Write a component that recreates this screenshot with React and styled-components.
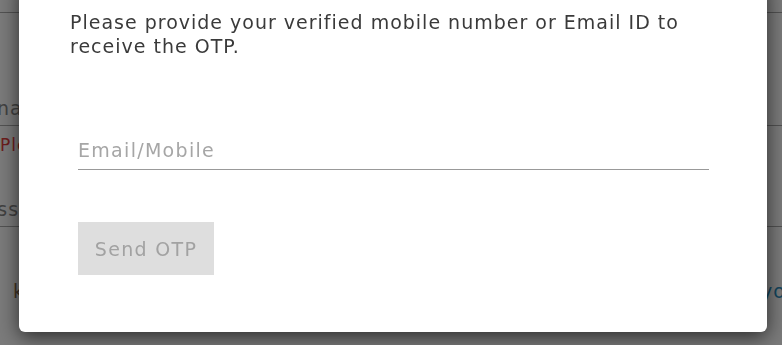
import styled, { createGlobalStyle } from "styled-components";

const GlobalStyle = createGlobalStyle`
  html, body {
    margin: 0;
    padding: 0;
    width: 782px;
    height: 345px;
    overflow: hidden;
    background: #fff;
    font-family: "DejaVu Sans", "Open Sans", sans-serif;
    letter-spacing: 1px;
  }
`;

// page behind the modal
const Page = styled.div`
  width: 782px;
  height: 345px;
  overflow: hidden;
`;

const Form = styled.form`
  margin: 12px -60px 0;
  border-top: 1px solid #aaa;
  display: flex;
  flex-direction: column;
`;

const Field = styled.div`
  height: ${(p) => p.$height}px;
  display: flex;
  align-items: flex-end;
  padding-bottom: 6px;
  border-bottom: 1px solid #aaa;
  box-sizing: border-box;
  font-size: 19px;
  color: #888;
  text-indent: ${(p) => p.$indent}px;
`;

const Error = styled.div`
  height: 60px;
  padding-top: 9px;
  box-sizing: border-box;
  font-size: 17px;
  color: #e03c3c;
  text-indent: ${(p) => p.$indent}px;
`;

const Footer = styled.div`
  display: flex;
  justify-content: space-between;
  align-items: center;
  padding: 53px 0 0 73px;
  font-size: 19px;
`;

const Remember = styled.span`
  color: #8a6a50;
`;

const Forgot = styled.a`
  color: #2a8fc0;
  margin-right: -82px;
`;

// modal
const Backdrop = styled.div`
  position: fixed;
  inset: 0;
  background: rgba(0, 0, 0, 0.52);
  display: flex;
  align-items: flex-start;
  padding-left: 19px;
`;

const Modal = styled.div`
  width: 748px;
  margin-top: -20px;
  box-sizing: border-box;
  padding: 30px 51px 57px;
  background: #fff;
  border-radius: 6px;
  box-shadow: 0 5px 20px rgba(0, 0, 0, 0.65);
`;

const Message = styled.p`
  margin: 0;
  font-size: 19px;
  line-height: 24px;
  color: #3a3a3a;
`;

const Input = styled.input`
  display: block;
  box-sizing: border-box;
  margin: 72px 0 0 8px;
  width: 631px;
  height: 40px;
  padding: 0;
  border: none;
  border-bottom: 1px solid #999;
  outline: none;
  font-family: inherit;
  letter-spacing: 1.3px;
  font-size: 19px;
  color: #333;

  &::placeholder {
    color: #a6a6a6;
  }
`;

const SendButton = styled.button`
  display: block;
  margin: 52px 0 0 8px;
  width: 136px;
  height: 53px;
  border: none;
  background: #dedede;
  color: #a2a2a2;
  font-family: inherit;
  letter-spacing: 1.3px;
  font-size: 19px;
`;

export default function App() {
  return (
    <>
      <GlobalStyle />
      <Page>
        <Form>
          <Field $height={113} $indent={10}>Username</Field>
          <Error $indent={60}>Please enter username</Error>
          <Field $height={41} $indent={33}>Password</Field>
          <Footer>
            <Remember>keep me signed in</Remember>
            <Forgot>your password?</Forgot>
          </Footer>
        </Form>
      </Page>
      <Backdrop>
        <Modal>
          <Message>
            Please provide your verified mobile number or Email ID to receive
            the OTP.
          </Message>
          <Input placeholder="Email/Mobile" />
          <SendButton disabled>Send OTP</SendButton>
        </Modal>
      </Backdrop>
    </>
  );
}
